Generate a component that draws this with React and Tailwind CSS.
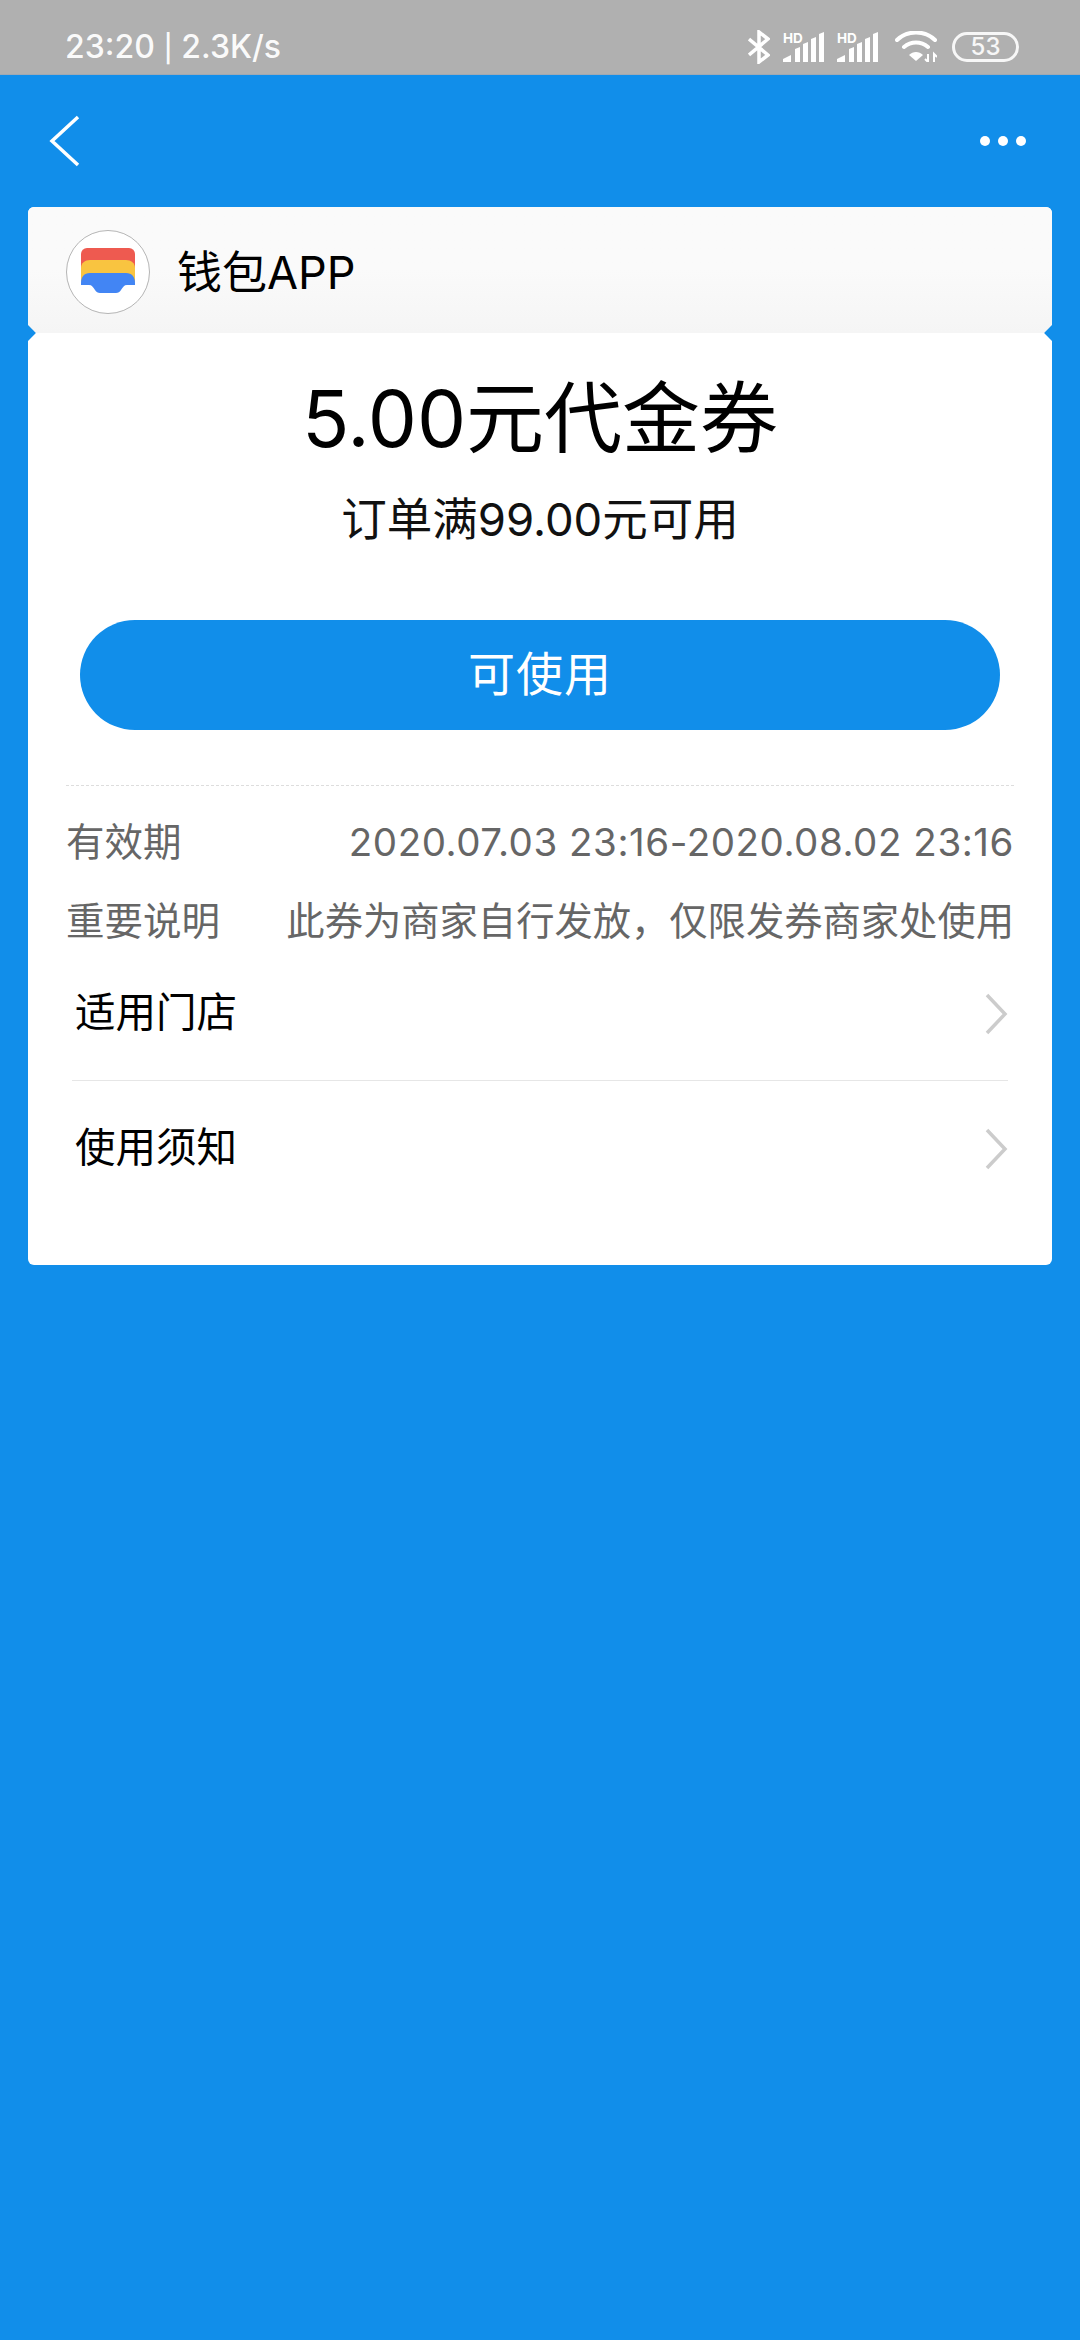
const sans = "font-['Inter','Noto_Sans_CJK_SC',sans-serif]";

function Signal() {
  return (
    <svg width="41" height="30" viewBox="0 0 41 30" fill="#fff" className="overflow-visible">
      <text x="0" y="11" fontSize="13.5" fontWeight="700" fontFamily="Inter, sans-serif">HD</text>
      <path d="M0 30v-3l8-4v7zM12 30V17l5-2v15zM20 30V12l5-2v20zM28 30V7l5-2v25zM36 30V2l5-2v30z" />
    </svg>
  );
}

function Wifi() {
  return (
    <svg width="42" height="31" viewBox="0 0 42 31" fill="none" stroke="#fff" strokeWidth="4" strokeLinecap="round">
      <path d="M2 9C12-1 30-1 40 9M9 16c7-6 17-6 24 0" />
      <path d="M14 24c4-4 10-4 14 0l-7 6z" fill="#fff" stroke="none" />
      <path d="M33 23v8l-3-3M39 31v-8l3 3" strokeWidth="2" strokeLinecap="butt" />
    </svg>
  );
}

function StatusBar() {
  return (
    <div className="h-[75px] bg-[#b0b0b0] border-b border-[#9fa9b3] flex items-center justify-between pl-[65px] pr-[61px] text-white">
      <span className="mt-[20px] text-[32px] font-medium leading-none text-white/95">
        23:20 <span className="text-[27px]">|</span> 2.3K/s
      </span>
      <div className="mt-[19px] flex items-center">
        <svg width="22" height="34" viewBox="0 0 22 34" fill="none" stroke="#fff" strokeWidth="3.5">
          <path d="M1 9l19 16-9 7V2l9 7L1 25" />
        </svg>
        <div className="ml-[13px]"><Signal /></div>
        <div className="ml-[13px]"><Signal /></div>
        <div className="ml-[17px]"><Wifi /></div>
        <div className="ml-[15px] w-[67px] h-[30px] rounded-full border-[3px] border-white/90 flex items-center justify-center text-[24px] font-medium leading-none text-white/90">53</div>
      </div>
    </div>
  );
}

function Logo() {
  return (
    <svg width="54" height="45" viewBox="0 0 54 45">
      <path d="M0 6a6 6 0 0 1 6-6h42a6 6 0 0 1 6 6v14H0z" fill="#ee5a50" />
      <path d="M0 20c0-5 4-8 9-8h36c5 0 9 3 9 8v14H0z" fill="#f9c440" />
      <path d="M0 35c0-6 3-10 9-10h36c6 0 9 4 9 10v2h-8c-3 0-4 2-6 5-1 2-3 3-5 3H19c-2 0-4-1-5-3-2-3-3-5-6-5H0z" fill="#4285f4" />
    </svg>
  );
}

function InfoRow({ label, value, valueClass }) {
  return (
    <div className="flex items-center justify-between text-[#666666] leading-none">
      <span className="text-[38.5px]">{label}</span>
      <span className={valueClass}>{value}</span>
    </div>
  );
}

function LinkRow({ label, height }) {
  return (
    <div className={`flex items-center justify-between pl-[3px] ${height}`}>
      <span className="text-[40.5px] text-black leading-none">{label}</span>
      <svg width="24" height="42" viewBox="0 0 24 42" fill="none" stroke="#cccccc" strokeWidth="3.5">
        <path d="M3 2l18 19L3 40" />
      </svg>
    </div>
  );
}

export default function App() {
  return (
    <div className={`${sans} w-[1080px] h-[2340px] bg-[#118eea]`}>
      <StatusBar />

      <div className="h-[132px] flex items-center justify-between pl-[49px] pr-[54px]">
        <svg width="32" height="52" viewBox="0 0 32 52" fill="none" stroke="#fff" strokeWidth="3.5">
          <path d="M29 2L3 26l26 24" />
        </svg>
        <div className="flex gap-[8px]">
          <span className="w-[10px] h-[10px] rounded-full bg-white" />
          <span className="w-[10px] h-[10px] rounded-full bg-white" />
          <span className="w-[10px] h-[10px] rounded-full bg-white" />
        </div>
      </div>

      <div className="relative mx-[28px] h-[1058px] bg-white rounded-[6px] overflow-hidden">
        <div className="h-[126px] bg-gradient-to-b from-[#fafafa] via-[#fafafa] to-[#f5f5f5] flex items-center pl-[38px] pt-[4px]">
          <div className="w-[84px] h-[84px] rounded-full bg-white border border-[#b5b5b5] flex items-center justify-center pb-[3px]">
            <Logo />
          </div>
          <span className="ml-[27px] text-[45px] text-black leading-none">钱包APP</span>
        </div>
        <span className="absolute left-[-9px] top-[119px] w-[14px] h-[14px] rotate-45 bg-[#118eea]" />
        <span className="absolute right-[-9px] top-[119px] w-[14px] h-[14px] rotate-45 bg-[#118eea]" />

        <div className="flex flex-col items-center">
          <h1 className="mt-[47px] text-[78px] font-normal text-black leading-none">5.00元代金券</h1>
          <p className="mt-[39px] text-[45.5px] text-[#111111] leading-none">订单满99.00元可用</p>
          <div className="mt-[77px] w-[920px] h-[110px] rounded-full bg-[#118eea] flex items-center justify-center text-white text-[47px] tracking-[1px]">可使用</div>
        </div>

        <div className="mx-[38px] mt-[55px] border-t border-dashed border-[#dddddd]" />

        <div className="mx-[38px] mt-[37px] flex flex-col gap-[41px]">
          <InfoRow label="有效期" value="2020.07.03 23:16-2020.08.02 23:16" valueClass="text-[38.5px] tracking-[0.55px]" />
          <InfoRow label="重要说明" value="此券为商家自行发放，仅限发券商家处使用" valueClass="text-[38.3px]" />
        </div>

        <div className="mx-[44px] mt-[7px]">
          <div className="border-b border-[#e6e6e6]"><LinkRow label="适用门店" height="h-[132px]" /></div>
          <LinkRow label="使用须知" height="h-[136px]" />
        </div>
      </div>
    </div>
  );
}
